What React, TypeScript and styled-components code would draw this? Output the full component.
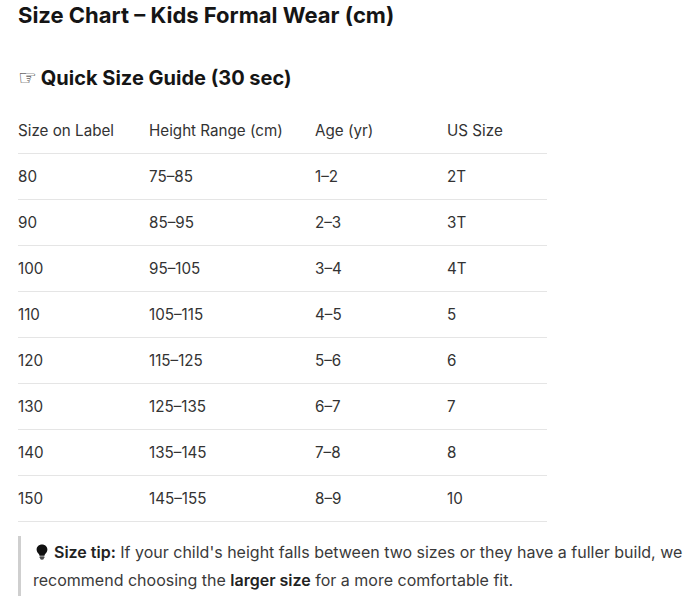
import React from "react";
import styled, { createGlobalStyle } from "styled-components";

// Style
const GlobalStyle = createGlobalStyle`
  body {
    margin: 0;
    background: #ffffff;
    font-family: Inter, "Noto Sans", sans-serif;
    color: #1f1f1f;
  }
`;

const Page = styled.div`
  padding: 0 4px 0 18px;
`;

const Title = styled.h2`
  margin: 0;
  padding-top: 1px;
  font-size: 22px;
  line-height: 28px;
  font-weight: 700;
  color: #151515;
`;

const Subtitle = styled.h3`
  margin: 36px 0 0;
  font-size: 20px;
  line-height: 26px;
  font-weight: 700;
  color: #151515;
  display: flex;
  align-items: center;
  gap: 4px;
`;

const Hand = styled.span`
  font-family: "DejaVu Sans", sans-serif;
  font-weight: 400;
  font-size: 21px;
  line-height: 1;
`;

const Table = styled.table`
  margin-top: 17px;
  width: 529px;
  border-collapse: collapse;
  font-size: 15.2px;
  color: #333333;

  th,
  td {
    text-align: left;
    font-weight: 400;
    height: 45px;
    padding: 0;
    border-bottom: 1px solid #e5e5e5;
  }
`;

const Tip = styled.blockquote`
  margin: 14px 0 0;
  padding: 2px 0 2px 12px;
  border-left: 3px solid #cfcfcf;
  font-size: 16px;
  line-height: 28px;
  color: #3a3a3a;

  b {
    font-weight: 600;
    color: #222;
  }
`;

const Bulb = styled.svg`
  width: 12px;
  height: 16px;
  vertical-align: -2px;
  margin: 0 6px 0 3px;
`;

const columns = [131, 166, 132, 100];

const rows = [
  ["80", "75–85", "1–2", "2T"],
  ["90", "85–95", "2–3", "3T"],
  ["100", "95–105", "3–4", "4T"],
  ["110", "105–115", "4–5", "5"],
  ["120", "115–125", "5–6", "6"],
  ["130", "125–135", "6–7", "7"],
  ["140", "135–145", "7–8", "8"],
  ["150", "145–155", "8–9", "10"],
];

function App() {
  return (
    <Page>
      <GlobalStyle />
      <Title>Size Chart – Kids Formal Wear (cm)</Title>
      <Subtitle>
        <Hand>☞</Hand> Quick Size Guide (30 sec)
      </Subtitle>
      <Table>
        <colgroup>
          {columns.map((w, i) => (
            <col key={i} style={{ width: w }} />
          ))}
        </colgroup>
        <thead>
          <tr>
            <th>Size on Label</th>
            <th>Height Range (cm)</th>
            <th>Age (yr)</th>
            <th>US Size</th>
          </tr>
        </thead>
        <tbody>
          {rows.map((r) => (
            <tr key={r[0]}>
              {r.map((c, i) => (
                <td key={i}>{c}</td>
              ))}
            </tr>
          ))}
        </tbody>
      </Table>
      <Tip>
        <Bulb viewBox="0 0 12 16">
          <path
            d="M6 0.5C2.9 0.5 0.6 2.8 0.6 5.6c0 2 1.1 3.2 2 4.2.6.7.9 1.3.9 2h5c0-.7.3-1.3.9-2 .9-1 2-2.2 2-4.2C11.4 2.8 9.1.5 6 .5z"
            fill="#111"
          />
          <rect x="3.5" y="12.4" width="5" height="1.3" rx="0.5" fill="#111" />
          <path d="M4 14.3h4c0 .8-.9 1.3-2 1.3s-2-.5-2-1.3z" fill="#111" />
        </Bulb>
        <b>Size tip:</b> If your child's height falls between two sizes or they
        have a fuller build, we recommend choosing the <b>larger size</b> for a
        more comfortable fit.
      </Tip>
    </Page>
  );
}

export default App;
